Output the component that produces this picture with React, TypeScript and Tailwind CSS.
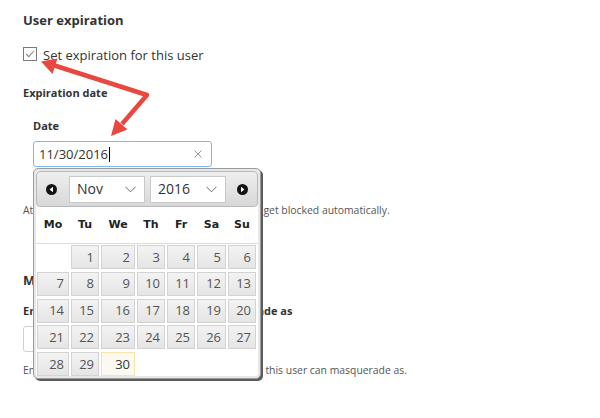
import React from "react";

const COLS = "grid grid-cols-[32px_28px_34px_28px_28px_29px_28px] gap-x-[2px]";

function Chevron() {
  return (
    <svg width="11" height="7" viewBox="0 0 11 7">
      <polyline points="0.5,0.8 5.5,5.8 10.5,0.8" fill="none" stroke="#666" strokeWidth="1" />
    </svg>
  );
}

function NavIcon({ dir }: { dir: "prev" | "next" }) {
  return (
    <svg width="11" height="11" viewBox="0 0 11 11">
      <circle cx="5.5" cy="5.5" r="5.5" fill="#141414" />
      {dir === "prev" ? (
        <polygon points="7,2.8 3.6,5.5 7,8.2" fill="#fff" />
      ) : (
        <polygon points="4,2.8 7.4,5.5 4,8.2" fill="#fff" />
      )}
    </svg>
  );
}

function Select({ value }: { value: string }) {
  return (
    <div className="flex h-[27px] w-[76px] items-center justify-between border border-[#c9c9c9] bg-white pl-[7px] pr-[8px] text-[14px] leading-none text-[#333]">
      <span>{value}</span>
      <Chevron />
    </div>
  );
}

function DayCell({ d, today }: { d: number; today?: boolean }) {
  return (
    <div
      className={
        today
          ? "flex h-[24px] items-center justify-end border border-[#f3e6a6] bg-[#fcfaf0] pr-[4px] text-[13px] leading-none text-[#363636]"
          : "flex h-[24px] items-center justify-end border border-[#d3d3d3] bg-[linear-gradient(to_bottom,#f3f3f3,#e5e5e5)] pr-[4px] text-[13px] leading-none text-[#555]"
      }
    >
      {d}
    </div>
  );
}

function DatePicker() {
  const days: (number | null)[] = [null];
  for (let i = 1; i <= 30; i++) days.push(i);
  return (
    <div className="absolute left-[33px] top-[168px] z-10 w-[228px] rounded-[5px] border border-[#9c9c9c] bg-[#e8e8e8] p-[2px] shadow-[2px_2px_0_0_#5c5c5c]">
      <div className="rounded-[3px] bg-white pb-0">
        <div className="flex h-[36px] items-center rounded-[4px] border border-[#b8b8b8] bg-[linear-gradient(to_bottom,#eeeeee,#d8d8d8)] pl-[9px]">
          <NavIcon dir="prev" />
          <div className="ml-[12px]">
            <Select value="Nov" />
          </div>
          <div className="ml-[5px]">
            <Select value="2016" />
          </div>
          <div className="ml-[11px]">
            <NavIcon dir="next" />
          </div>
        </div>
        <div className={`${COLS} h-[36px] items-center px-[1px] font-['DejaVu_Sans',sans-serif] text-[11px] font-bold text-[#222]`}>
          {["Mo", "Tu", "We", "Th", "Fr", "Sa", "Su"].map((w) => (
            <div key={w} className="text-center">
              {w}
            </div>
          ))}
        </div>
        <div className="h-px bg-[#dcdcdc]" />
        <div className={`${COLS} mt-px gap-y-[2.75px] px-[1px]`}>
          {days.map((d, i) =>
            d === null ? <div key={i} /> : <DayCell key={i} d={d} today={d === 30} />
          )}
        </div>
      </div>
    </div>
  );
}

function RedArrow() {
  return (
    <svg className="pointer-events-none absolute left-0 top-0 z-20" width="600" height="418" viewBox="0 0 600 418">
      <polyline
        points="53,65 147,95 122,124"
        fill="none"
        stroke="#e8483e"
        strokeWidth="4.5"
        strokeLinejoin="round"
      />
      <polygon points="41,61.5 57.5,58.5 52.5,74" fill="#e8483e" />
      <polygon points="111,136 127.5,129.5 115.5,119" fill="#e8483e" />
    </svg>
  );
}

export default function App() {
  return (
    <div className="relative h-[418px] w-[600px] overflow-hidden bg-white font-['Open_Sans',sans-serif] text-[#333]">
      <div className="pl-[23px] pt-[10px]">
        <h2 className="text-[13px] font-bold leading-[20px]">User expiration</h2>
        <label className="mt-[14.5px] flex h-[20px] items-center">
          <svg width="14" height="14" viewBox="0 0 14 14" className="mt-[-1px]">
            <rect x="0.5" y="0.5" width="13" height="13" fill="#fff" stroke="#7a7a7a" />
            <polyline points="3.2,7 5.8,9.6 10.8,4" fill="none" stroke="#8a8a8a" strokeWidth="1.1" />
          </svg>
          <span className="ml-[6px] text-[13px] leading-[20px]">Set expiration for this user</span>
        </label>
        <h3 className="mt-[20.5px] text-[11px] font-bold leading-[16px]">Expiration date</h3>
        <div className="pl-[10px]">
          <div className="mt-[17px] text-[11px] font-bold leading-[16px]">Date</div>
          <div className="mt-[7px] flex h-[26px] w-[179px] items-center rounded-[3px] border border-[#80b8ea] pl-[5px] pr-[9px] text-[13px] text-[#333]">
            <span className="leading-none">11/30/2016</span>
            <span className="ml-[1px] h-[15px] w-px bg-black" />
            <span className="flex-1" />
            <svg width="8" height="8" viewBox="0 0 8 8">
              <path d="M0.5 0.5 L7.5 7.5 M7.5 0.5 L0.5 7.5" stroke="#9a9a9a" strokeWidth="1" />
            </svg>
          </div>
        </div>
        <p className="mt-[35px] text-[10.4px] leading-[16px] text-[#555]">
          At the end of the set expiration date this user will get blocked automatically.
        </p>
        <h2 className="mt-[52px] text-[13px] font-bold leading-[20px]">Masquerade</h2>
        <div className="mt-[13px] text-[11px] font-bold leading-[16px]">
          Enter the users that this user can masquerade as
        </div>
        <div className="mt-[7px] h-[26px] w-[200px] rounded-[3px] border border-[#cfcfcf]" />
        <p className="mt-[10px] text-[10.4px] leading-[16px] text-[#555]">
          Enter the usernames, or email addresses of users this user can masquerade as.
        </p>
      </div>
      <DatePicker />
      <RedArrow />
    </div>
  );
}
